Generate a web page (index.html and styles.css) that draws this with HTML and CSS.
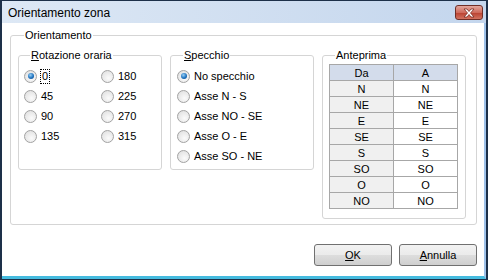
FILE: index.html
```html
<!DOCTYPE html>
<html lang="it">
<head>
  <meta charset="UTF-8" />
  <title>Orientamento zona</title>
  <link rel="stylesheet" href="styles.css">
</head>
<body>
  <div class="window">
    <div class="titlebar">
      <span class="title">Orientamento zona</span>
      <button class="close" title="Chiudi">
        <svg width="14" height="10" viewBox="0 0 14 10">
          <path d="M2 1 L5 1 L7 3.5 L9 1 L12 1 L8.5 5 L12 9 L9 9 L7 6.5 L5 9 L2 9 L5.5 5 Z" fill="#fff" stroke="#7a2a20" stroke-width="0.8"/>
        </svg>
      </button>
    </div>

    <div class="client">
      <fieldset class="group outer">
        <legend>Orientamento</legend>
        <div class="groups">
          <!-- Rotazione -->
          <fieldset class="group small">
            <legend><u>R</u>otazione oraria</legend>
            <div class="radio-grid">
              <label class="radio"><span class="dot checked"></span><span class="focus">0</span></label>
              <label class="radio"><span class="dot"></span>180</label>
              <label class="radio"><span class="dot"></span>45</label>
              <label class="radio"><span class="dot"></span>225</label>
              <label class="radio"><span class="dot"></span>90</label>
              <label class="radio"><span class="dot"></span>270</label>
              <label class="radio"><span class="dot"></span>135</label>
              <label class="radio"><span class="dot"></span>315</label>
            </div>
          </fieldset>

          <!-- Specchio -->
          <fieldset class="group small mirror">
            <legend><u>S</u>pecchio</legend>
            <div class="radio-list">
              <label class="radio"><span class="dot checked"></span>No specchio</label>
              <label class="radio"><span class="dot"></span>Asse N - S</label>
              <label class="radio"><span class="dot"></span>Asse NO - SE</label>
              <label class="radio"><span class="dot"></span>Asse O - E</label>
              <label class="radio"><span class="dot"></span>Asse SO - NE</label>
            </div>
          </fieldset>

          <!-- Anteprima -->
          <fieldset class="group preview">
            <legend>Anteprima</legend>
            <table class="grid">
              <tr><th>Da</th><th>A</th></tr>
              <tr><td>N</td><td>N</td></tr>
              <tr><td>NE</td><td>NE</td></tr>
              <tr><td>E</td><td>E</td></tr>
              <tr><td>SE</td><td>SE</td></tr>
              <tr><td>S</td><td>S</td></tr>
              <tr><td>SO</td><td>SO</td></tr>
              <tr><td>O</td><td>O</td></tr>
              <tr><td>NO</td><td>NO</td></tr>
            </table>
          </fieldset>
        </div>
      </fieldset>

      <div class="buttons">
        <button class="btn"><u>O</u>K</button>
        <button class="btn"><u>A</u>nnulla</button>
      </div>
    </div>
  </div>
</body>
</html>
```

FILE: styles.css
```css
html, body {
  margin: 0;
  padding: 0;
  background: #fff;
}

body {
  font-family: "Liberation Sans", Arial, sans-serif;
  font-size: 11px;
  color: #000;
}

.window {
  width: 488px;
  height: 280px;
  box-sizing: border-box;
  border-left: 2px solid #1d3049;
  border-right: 2px solid #1d3049;
  border-top: 1px solid #1d3049;
  border-bottom: 1px solid #1d3049;
  display: flex;
  flex-direction: column;
  background: #c6d8ee;
}

/* barra del titolo */
.titlebar {
  height: 22px;
  display: flex;
  align-items: center;
  justify-content: space-between;
  padding: 0 3px 0 6px;
  background: linear-gradient(to right, #dde8f5, #c4d6ed);
}
.title {
  font-size: 12px;
  margin-top: 2px;
}
.close {
  width: 28px;
  height: 15px;
  margin-top: 1px;
  padding: 0;
  border: 1px solid #6f2e26;
  border-radius: 3px;
  background: linear-gradient(#e3a79d, #cf6b5c 50%, #b9402f 51%, #d2725f);
  display: flex;
  align-items: center;
  justify-content: center;
}

.client {
  flex: 1;
  background: #fff;
  border-right: 2px solid #9fc2ea;
  border-bottom: 3px solid #45bbdf;
  padding: 6px 7px 0 8px;
  display: flex;
  flex-direction: column;
}

/* riquadri */
.group {
  margin: 0;
  border: 1px solid #d5d5d5;
  border-radius: 3px;
  padding: 0;
  min-width: 0;
}
.group legend {
  padding: 0 1px;
  margin-left: 6px;
  line-height: 13px;
}
.group.outer {
  height: 196px;
  box-sizing: border-box;
  padding: 7px 6px 0 7px;
}
.groups {
  display: flex;
  align-items: flex-start;
  gap: 8px;
}
.group.small {
  width: 144px;
  height: 121px;
  box-sizing: border-box;
  padding: 4px 0 0 5px;
}
.group.mirror {
  padding-left: 6px;
}
.group.preview {
  width: 144px;
  height: 170px;
  box-sizing: border-box;
  padding: 2px 0 0 6px;
}

/* radio */
.radio-grid {
  display: grid;
  grid-template-columns: 77px 60px;
}
.radio {
  height: 20px;
  display: flex;
  align-items: center;
  gap: 4px;
  white-space: nowrap;
}
.dot {
  width: 11px;
  height: 11px;
  border: 1px solid #a2a2a2;
  border-radius: 50%;
  background: radial-gradient(circle at 60% 65%, #fbfbfb, #dcdcdc);
  display: flex;
  align-items: center;
  justify-content: center;
  flex-shrink: 0;
}
.dot.checked::after {
  content: "";
  width: 6px;
  height: 6px;
  border-radius: 50%;
  background: radial-gradient(circle at 40% 35%, #9ad0f5, #1f73c0 55%, #0c3f7a);
}
.focus {
  outline: 1px dotted #000;
  padding: 0 1px;
  line-height: 13px;
}

/* tabella anteprima */
.grid {
  border-collapse: collapse;
  width: 129px;
  table-layout: fixed;
}
.grid th, .grid td {
  border: 1px solid #a7a7a7;
  height: 15px;
  padding: 0;
  text-align: center;
  font-weight: normal;
  line-height: 14px;
}
.grid th {
  background: #d3dceb;
}
.grid td:first-child {
  background: #f0f0f0;
}

/* pulsanti */
.buttons {
  display: flex;
  justify-content: flex-end;
  gap: 7px;
  margin-top: 19px;
}
.btn {
  width: 78px;
  height: 22px;
  font-family: inherit;
  font-size: 11px;
  color: #000;
  border: 1px solid #707070;
  border-radius: 3px;
  background: linear-gradient(#f2f2f2, #ebebeb 50%, #dddddd 51%, #cfcfcf);
  padding: 0;
}
```
